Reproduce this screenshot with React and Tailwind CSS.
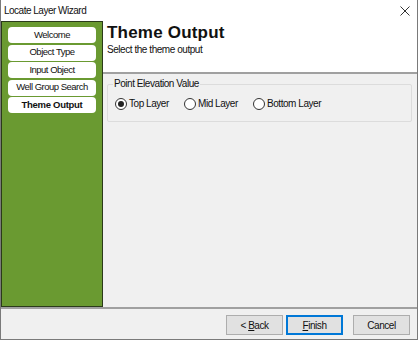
import React from "react"

const steps = ["Welcome", "Object Type", "Input Object", "Well Group Search", "Theme Output"]

function Radio({ checked, label }) {
  return (
    <label className="flex w-[69px] items-center gap-[2px]">
      <span className="flex h-[12px] w-[12px] shrink-0 items-center justify-center rounded-full border border-[#333] bg-white">
        {checked && <span className="h-[6px] w-[6px] rounded-full bg-[#222]" />}
      </span>
      <span className="whitespace-nowrap">{label}</span>
    </label>
  )
}

export default function App() {
  return (
    <div
      className="flex h-[340px] w-[418px] flex-col border border-t-0 border-[#7a7a7a] bg-[#f0f0f0] text-[10px] tracking-[-0.45px] text-[#111]"
      style={{ fontFamily: "'Liberation Sans', Arial, sans-serif" }}
    >
      {/* title bar */}
      <div className="flex h-[21px] shrink-0 items-center justify-between bg-white pl-[3px] pr-[4px]">
        <span className="tracking-[-0.5px]">Locate Layer Wizard</span>
        <svg width="10" height="10" viewBox="0 0 10 10" className="mr-[3px]">
          <path d="M0.5 0.5 L9.5 9.5 M9.5 0.5 L0.5 9.5" stroke="#333" strokeWidth="1" />
        </svg>
      </div>

      <div className="flex h-[286px] shrink-0">
        {/* sidebar */}
        <div className="flex w-[102px] flex-col gap-[1.5px] border border-[#2b3a1a] bg-[#6a9a31] px-[6px] pt-[5px] text-[9.5px]">
          {steps.map((s, i) => (
            <div
              key={s}
              className={`flex h-[16px] items-center justify-center rounded-[4px] bg-white ${
                i === steps.length - 1 ? "font-bold tracking-[-0.3px]" : "tracking-[-0.5px]"
              }`}
            >
              {s}
            </div>
          ))}
        </div>

        {/* content */}
        <div className="flex flex-1 flex-col">
          <div className="h-[53px] border-b-2 border-[#a0a0a0] bg-white pl-[4px] pt-[2px]">
            <div className="text-[17px] font-bold leading-[20px] tracking-[0.2px]">Theme Output</div>
            <div className="leading-[13px]">Select the theme output</div>
          </div>
          <div className="pl-[4px] pr-[5px] pt-[10px]">
            <div className="relative h-[38px] rounded-[2px] border border-[#dcdcdc] pl-[7px] pt-[11px]">
              <span className="absolute left-[5px] top-[-7px] bg-[#f0f0f0] px-[1px] leading-[12px]">
                Point Elevation Value
              </span>
              <div className="flex">
                <Radio checked label="Top Layer" />
                <Radio label="Mid Layer" />
                <Radio label="Bottom Layer" />
              </div>
            </div>
          </div>
        </div>
      </div>

      {/* footer */}
      <div className="flex flex-1 items-start justify-end gap-[3px] border-t-2 border-[#a0a0a0] pr-[7px] pt-[6px]">
        <button className="h-[20px] w-[57px] border border-[#adadad] bg-[#e1e1e1]">
          &lt; <u>B</u>ack
        </button>
        <button className="h-[20px] w-[57px] border-2 border-[#0078d7] bg-[#e1e1e1]">
          <u>F</u>inish
        </button>
        <button className="ml-[7px] h-[20px] w-[57px] border border-[#adadad] bg-[#e1e1e1]">
          Cancel
        </button>
      </div>
    </div>
  )
}
